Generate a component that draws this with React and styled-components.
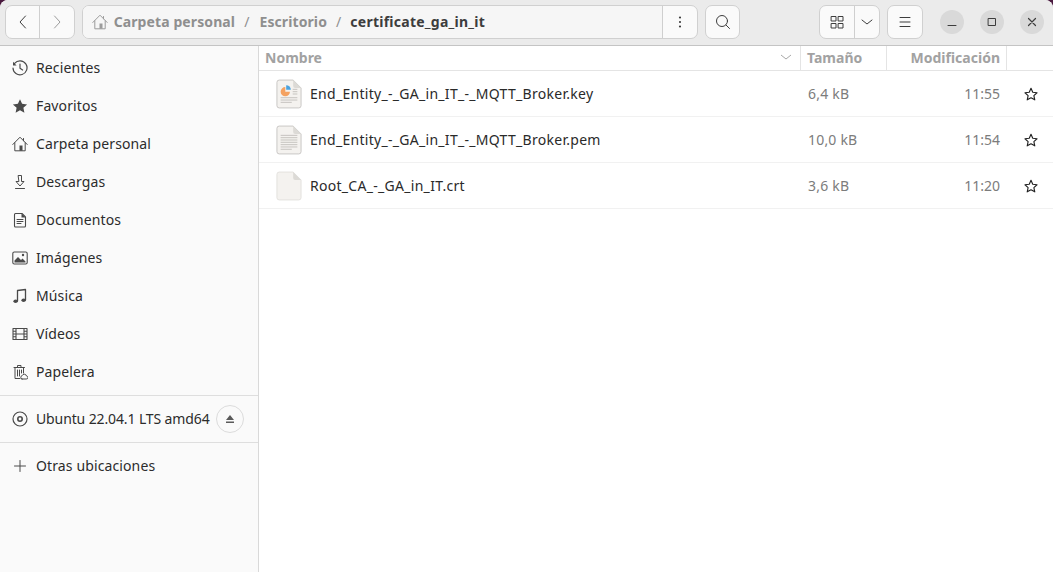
import React from "react";
import styled, { createGlobalStyle } from "styled-components";

const GlobalStyle = createGlobalStyle`
  html, body {
    margin: 0;
    padding: 0;
    background: #4a1a3f;
  }
  body {
    font-family: "Noto Sans", "Open Sans", sans-serif;
  }
`;

const Window = styled.div`
  width: 1053px;
  height: 572px;
  display: flex;
  flex-direction: column;
  overflow: hidden;
  border-radius: 8px 8px 0 0;
  background: #fafafa;
`;

const HeaderBar = styled.header`
  height: 46px;
  box-sizing: border-box;
  flex: none;
  display: flex;
  align-items: flex-start;
  padding: 5px 9px 0 5px;
  background: #ebebeb;
  border-bottom: 1px solid #c4c4c4;
`;

const ButtonGroup = styled.div`
  display: flex;
  height: 34px;
  box-sizing: border-box;
  margin-left: ${(p) => p.$ml || 0}px;
  border: 1px solid #d0d0d0;
  border-radius: 7px;
  background: #fafafa;
  overflow: hidden;
`;

const HeaderButton = styled.div`
  width: ${(p) => p.$w}px;
  height: 100%;
  display: flex;
  align-items: center;
  justify-content: center;
  flex: none;
  border-left: ${(p) => (p.$divider ? "1px solid #cfcfcf" : "none")};
  color: ${(p) => (p.$dim ? "#9c9c9c" : "#3d3d3d")};
`;

const PathBar = styled.div`
  width: 582px;
  display: flex;
  align-items: center;
  box-sizing: border-box;
  padding-left: 9px;
  background: #f6f6f6;
  font-size: 14px;
  letter-spacing: 0.1px;
`;

const Crumb = styled.span`
  font-weight: 700;
  white-space: nowrap;
  letter-spacing: ${(p) => (p.$current ? "0.25px" : "0.1px")};
  color: ${(p) => (p.$current ? "#3d3d3d" : "#8f8f8f")};
  margin: 0 0 2px ${(p) => p.$ml}px;
`;

const Slash = styled.span`
  color: #8f8f8f;
  margin: 0 0 2px ${(p) => p.$ml}px;
`;

const WindowControls = styled.div`
  display: flex;
  gap: 16px;
  margin-left: 17px;
  margin-top: 5px;
`;

const WindowControl = styled.div`
  width: 24px;
  height: 24px;
  border-radius: 50%;
  background: #d9d9d9;
  display: flex;
  align-items: center;
  justify-content: center;
  color: #3d3d3d;
`;

const Body = styled.div`
  flex: 1;
  display: flex;
  min-height: 0;
`;

const Sidebar = styled.nav`
  width: 259px;
  flex: none;
  box-sizing: border-box;
  border-right: 1px solid #d9d9d9;
  background: #fafafa;
  padding-top: 2px;
`;

const PlaceRow = styled.div`
  height: 38px;
  display: flex;
  align-items: center;
  padding-left: 12px;
  color: #2c2c2c;
  font-size: 14px;
  letter-spacing: ${(p) => (p.$tight ? "-0.12px" : "0.12px")};
  position: relative;
`;

const PlaceIcon = styled.div`
  width: 16px;
  height: 16px;
  margin: 2px 8px 0 0;
  flex: none;
  color: #4a4a4a;
  display: flex;
`;

const SideDivider = styled.div`
  height: 1px;
  background: #dedede;
  margin: 5px 0 3px;
`;

const EjectButton = styled.div`
  position: absolute;
  left: 216px;
  top: 6px;
  width: 28px;
  height: 28px;
  box-sizing: border-box;
  border: 1px solid #dcdcdc;
  border-radius: 50%;
  display: flex;
  align-items: center;
  justify-content: center;
  color: #5a5a5a;
`;

const FileArea = styled.main`
  flex: 1;
  background: #ffffff;
  min-width: 0;
`;

const ColumnHeader = styled.div`
  height: 25px;
  box-sizing: border-box;
  display: flex;
  border-bottom: 1px solid #e4e4e4;
  font-size: 14px;
  font-weight: 700;
  color: #a2a2a2;
`;

const HeaderCell = styled.div`
  width: ${(p) => p.$w}px;
  flex: ${(p) => (p.$grow ? 1 : "none")};
  box-sizing: border-box;
  display: flex;
  align-items: center;
  justify-content: ${(p) => (p.$end ? "flex-end" : "space-between")};
  padding: 0 ${(p) => p.$pr || 0}px 2px ${(p) => p.$pl || 0}px;
  border-right: ${(p) => (p.$line ? "1px solid #e4e4e4" : "none")};
`;

const FileRow = styled.div`
  height: 46px;
  box-sizing: border-box;
  display: flex;
  align-items: center;
  border-bottom: 1px solid #f1f1f1;
`;

const FileIconSlot = styled.div`
  width: 51px;
  padding-left: 17px;
  box-sizing: border-box;
  flex: none;
  display: flex;
`;

const FileName = styled.div`
  width: 491px;
  flex: none;
  font-size: 14px;
  letter-spacing: 0.29px;
  color: #2a2a2a;
  white-space: nowrap;
`;

const FileSize = styled.div`
  width: 86px;
  flex: none;
  padding-left: 7px;
  box-sizing: border-box;
  font-size: 14px;
  letter-spacing: 0.2px;
  color: #7c7c7c;
`;

const FileTime = styled.div`
  width: 120px;
  flex: none;
  padding-right: 7px;
  box-sizing: border-box;
  text-align: right;
  font-size: 14px;
  color: #7c7c7c;
`;

const StarSlot = styled.div`
  width: 47px;
  flex: none;
  display: flex;
  justify-content: center;
  color: #222;
`;

const line = { fill: "none", stroke: "currentColor", strokeWidth: 1, strokeLinecap: "round", strokeLinejoin: "round" };

const Svg = ({ size = 16, children }) => (
  <svg width={size} height={size} viewBox="0 0 16 16">{children}</svg>
);

const HomeGlyph = () => (
  <Svg>
    <path {...line} d="M0.800 8.500 8 1.200 15.200 8.500M2.800 6.800V14.800H13.200V6.800M11.500 2.500V4.800" />
    <path fill="currentColor" d="M7.500 9.500h3v5.300h-3z" />
  </Svg>
);

const icons = {
  clock: (
    <Svg>
      <path {...line} strokeWidth="1.200" d="M2.600 3.400A7 7 0 1 1 1 8" />
      <path {...line} strokeWidth="1.200" d="M8 4v4.300l2.600 1.700" />
      <path fill="currentColor" d="M1 1.800v3.600h3.600z" />
    </Svg>
  ),
  star: (
    <Svg>
      <path fill="currentColor" d="M8 1.200l2.100 4.600 5 .6-3.700 3.400 1 5L8 12.300l-4.400 2.500 1-5L.9 6.400l5-.6z" />
    </Svg>
  ),
  home: <HomeGlyph />,
  download: (
    <Svg>
      <path {...line} d="M6.500 1.500h3v6H12L8 12 4 7.500h2.500zM3.500 14.500h9" />
    </Svg>
  ),
  doc: (
    <Svg>
      <path {...line} strokeWidth="1.100" d="M2.500 2.500a1 1 0 0 1 1-1H10l3.500 3.500v9a1 1 0 0 1-1 1h-9a1 1 0 0 1-1-1z" />
      <path {...line} d="M5 7.500h6M5 9.500h6M5 11.500h4" />
      <path fill="currentColor" d="M9.500 1.500l4 4h-4z" />
    </Svg>
  ),
  image: (
    <Svg>
      <rect {...line} strokeWidth="1.100" x="0.800" y="2" width="14.400" height="12" rx="1.500" />
      <path fill="currentColor" d="M2.500 12.500v-2l3.500-3.500 3 3 1.500-1.500 3 3v1z" />
      <circle fill="currentColor" cx="11" cy="5" r="1.200" />
    </Svg>
  ),
  music: (
    <Svg>
      <path {...line} strokeWidth="1.300" d="M5.500 13V2.500l8-1V12" />
      <ellipse fill="currentColor" cx="3.600" cy="13.200" rx="2.200" ry="1.700" />
      <ellipse fill="currentColor" cx="11.600" cy="12.200" rx="2.200" ry="1.700" />
    </Svg>
  ),
  video: (
    <Svg>
      <path {...line} strokeWidth="1.100" d="M1 2.500h14v11H1zM4 2.500v11M12 2.500v11M4 8h8M1 5.200h3M1 8h3M1 10.800h3M12 5.200h3M12 8h3M12 10.800h3" />
    </Svg>
  ),
  trash: (
    <Svg>
      <path {...line} d="M2 3.500h10.500M5.500 3.500V1.500h3.500v2M3 3.500V14.500h5M11.500 3.500V9M5.500 6v6M7.500 6v6M9.500 6v3" />
      <path {...line} d="M10 15h4.200a1.500 1.500 0 0 0 .3-3 2.300 2.300 0 0 0-4.400-.3A1.700 1.700 0 0 0 10 15z" />
    </Svg>
  ),
  disc: (
    <Svg>
      <circle {...line} strokeWidth="1.200" cx="8" cy="8" r="7" />
      <circle {...line} strokeWidth="1.600" cx="8" cy="8" r="2.200" />
    </Svg>
  ),
  plus: (
    <Svg>
      <path {...line} d="M8 2.500v11M2.500 8h11" />
    </Svg>
  ),
};

const places = [
  ["clock", "Recientes"],
  ["star", "Favoritos"],
  ["home", "Carpeta personal"],
  ["download", "Descargas"],
  ["doc", "Documentos"],
  ["image", "Imágenes"],
  ["music", "Música"],
  ["video", "Vídeos"],
  ["trash", "Papelera"],
];

const files = [
  { kind: "key", name: "End_Entity_-_GA_in_IT_-_MQTT_Broker.key", size: "6,4 kB", time: "11:55" },
  { kind: "pem", name: "End_Entity_-_GA_in_IT_-_MQTT_Broker.pem", size: "10,0 kB", time: "11:54" },
  { kind: "crt", name: "Root_CA_-_GA_in_IT.crt", size: "3,6 kB", time: "11:20" },
];

const FileGlyph = ({ kind }) => (
  <svg width="26" height="30" viewBox="0 0 28 32">
    <path
      d="M3.500 1h15L27 9.500V28.500a2.500 2.500 0 0 1-2.500 2.500h-21A2.500 2.500 0 0 1 1 28.500V3.500A2.500 2.500 0 0 1 3.500 1z"
      fill="#f4f2ef"
      stroke={kind === "crt" ? "#e2e0dc" : "#c6c4c1"}
      strokeWidth="1"
    />
    <path d="M18.500 1 27 9.500h-6.500a2 2 0 0 1-2-2z" fill="#dcdad6" />
    {kind === "key" && (
      <>
        <path d="M10 8.500a5 5 0 1 0 5 5h-5z" fill="#f4a261" />
        <path d="M11 6.500a5 5 0 0 1 5 5h-5z" fill="#4aa3df" />
        <path d="M18 11h5M18 13.500h5M18 16h5M5 20h18M5 22.500h18M5 25h12" stroke="#c2c0bc" strokeWidth="1" fill="none" />
      </>
    )}
    {kind === "pem" && (
      <path
        d="M5 11h18M5 13.500h18M5 16h18M5 18.500h18M5 21h18M5 23.500h18M5 26h12"
        stroke="#c2c0bc"
        strokeWidth="1"
        fill="none"
      />
    )}
  </svg>
);

const StarOutline = () => (
  <svg width="14" height="14" viewBox="0 0 16 16">
    <path
      d="M8 1.500l2 4.500 4.900.6-3.600 3.300 1 4.800L8 12.300l-4.300 2.400 1-4.800L1.100 6.600 6 6z"
      fill="none"
      stroke="currentColor"
      strokeWidth="1.300"
      strokeLinejoin="round"
    />
  </svg>
);

export default function App() {
  return (
    <>
      <GlobalStyle />
      <Window>
        <HeaderBar>
          <ButtonGroup>
            <HeaderButton $w={33}>
              <Svg>
                <path {...line} d="M10.500 2 5 8l5.500 6" />
              </Svg>
            </HeaderButton>
            <HeaderButton $w={34} $divider $dim>
              <Svg>
                <path {...line} d="M5.500 2 11 8l-5.500 6" />
              </Svg>
            </HeaderButton>
          </ButtonGroup>
          <ButtonGroup $ml={7}>
            <PathBar>
              <HeaderButton $w={16} $dim>
                <HomeGlyph />
              </HeaderButton>
              <Crumb $ml={6}>Carpeta personal</Crumb>
              <Slash $ml={9}>/</Slash>
              <Crumb $ml={10}>Escritorio</Crumb>
              <Slash $ml={9}>/</Slash>
              <Crumb $ml={9} $current>certificate_ga_in_it</Crumb>
            </PathBar>
            <HeaderButton $w={34} $divider>
              <svg width="16" height="16" viewBox="0 0 16 16">
                <circle cx="8" cy="3.500" r="1.100" fill="currentColor" />
                <circle cx="8" cy="8" r="1.100" fill="currentColor" />
                <circle cx="8" cy="12.500" r="1.100" fill="currentColor" />
              </svg>
            </HeaderButton>
          </ButtonGroup>
          <ButtonGroup $ml={7}>
            <HeaderButton $w={34}>
              <Svg>
                <circle {...line} cx="7" cy="7" r="5.500" />
                <path {...line} d="M11 11l3.500 3.500" />
              </Svg>
            </HeaderButton>
          </ButtonGroup>
          <ButtonGroup $ml={79}>
            <HeaderButton $w={34}>
              <Svg>
                <path {...line} d="M2.500 2.500h4.500v4.500H2.500zM9.500 2.500H14v4.500H9.500zM2.500 9.500h4.500V14H2.500zM9.500 9.500H14V14H9.500z" />
              </Svg>
            </HeaderButton>
            <HeaderButton $w={24} $divider>
              <Svg>
                <path {...line} d="M3 6l5 4 5-4" />
              </Svg>
            </HeaderButton>
          </ButtonGroup>
          <ButtonGroup $ml={7}>
            <HeaderButton $w={34}>
              <Svg>
                <path {...line} d="M3 3.500h10M3 8h10M3 12.500h10" />
              </Svg>
            </HeaderButton>
          </ButtonGroup>
          <WindowControls>
            <WindowControl>
              <Svg>
                <path {...line} d="M4 11.500h8" />
              </Svg>
            </WindowControl>
            <WindowControl>
              <Svg>
                <path {...line} d="M4.500 4.500h7v7h-7z" />
              </Svg>
            </WindowControl>
            <WindowControl>
              <Svg>
                <path {...line} strokeWidth="1.200" d="M4.500 4.500l7 7M11.500 4.500l-7 7" />
              </Svg>
            </WindowControl>
          </WindowControls>
        </HeaderBar>
        <Body>
          <Sidebar>
            {places.map(([icon, label]) => (
              <PlaceRow key={label}>
                <PlaceIcon>{icons[icon]}</PlaceIcon>
                {label}
              </PlaceRow>
            ))}
            <SideDivider />
            <PlaceRow $tight>
              <PlaceIcon>{icons.disc}</PlaceIcon>
              Ubuntu 22.04.1 LTS amd64
              <EjectButton>
                <svg width="12" height="12" viewBox="0 0 12 12">
                  <path d="M6 2l4 5H2zM2 8.500h8V10H2z" fill="currentColor" />
                </svg>
              </EjectButton>
            </PlaceRow>
            <SideDivider />
            <PlaceRow>
              <PlaceIcon>{icons.plus}</PlaceIcon>
              Otras ubicaciones
            </PlaceRow>
          </Sidebar>
          <FileArea>
            <ColumnHeader>
              <HeaderCell $w={542} $pl={6} $pr={7} $line>
                Nombre
                <svg width="14" height="14" viewBox="0 0 14 14">
                  <path d="M2 5l5 4 5-4" fill="none" stroke="#a8a8a8" strokeWidth="1" />
                </svg>
              </HeaderCell>
              <HeaderCell $w={86} $pl={6} $line>Tamaño</HeaderCell>
              <HeaderCell $w={120} $pr={6} $end $line>Modificación</HeaderCell>
              <HeaderCell $grow />
            </ColumnHeader>
            {files.map((f) => (
              <FileRow key={f.name}>
                <FileIconSlot>
                  <FileGlyph kind={f.kind} />
                </FileIconSlot>
                <FileName>{f.name}</FileName>
                <FileSize>{f.size}</FileSize>
                <FileTime>{f.time}</FileTime>
                <StarSlot>
                  <StarOutline />
                </StarSlot>
              </FileRow>
            ))}
          </FileArea>
        </Body>
      </Window>
    </>
  );
}
